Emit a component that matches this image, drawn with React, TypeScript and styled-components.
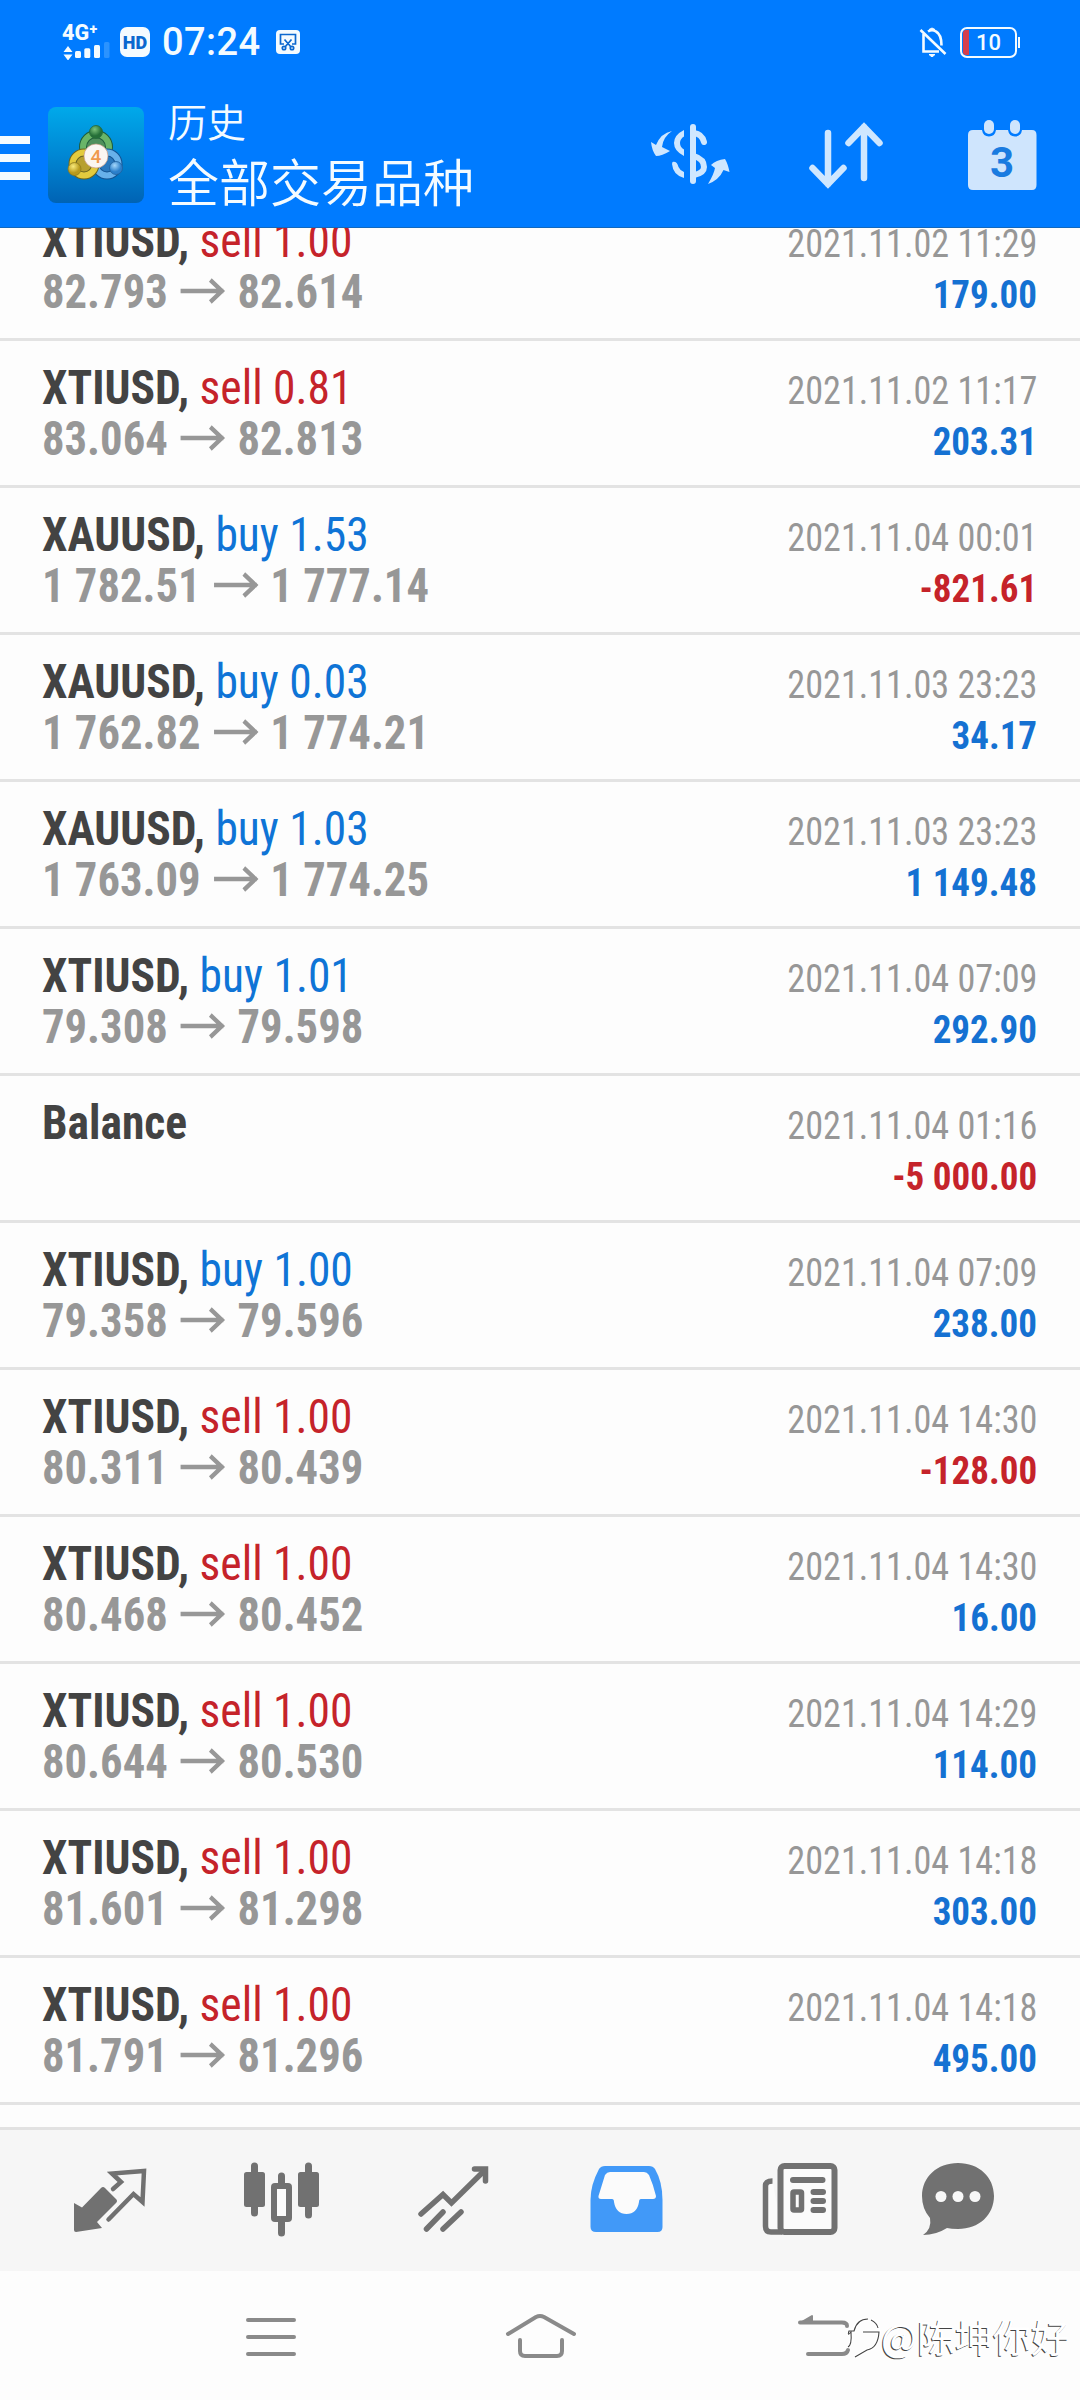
import React from "react";
import styled, { createGlobalStyle } from "styled-components";

const condensed = `"Roboto Condensed", Roboto, sans-serif`;
const cjk = `Roboto, "Noto Sans CJK SC", sans-serif`;

const Global = createGlobalStyle`
  * { box-sizing: border-box; }
  body { margin: 0; background: #fdfdfd; }
  svg { display: block; flex: none; }
`;

const Screen = styled.div`
  width: 1080px;
  height: 2400px;
  display: flex;
  flex-direction: column;
  overflow: hidden;
  background: #fdfdfd;
  font-family: ${cjk};
`;

const Header = styled.header`
  height: 228px;
  flex: none;
  background: #007bff;
  border-bottom: 1px solid #1268bd;
  color: #f4fbff;
`;

const StatusBar = styled.div`
  height: 84px;
  display: flex;
  align-items: center;
  padding: 0 60px 0 62px;
`;

const Network = styled.div`
  width: 58px;
  height: 36px;
  display: flex;
  flex-direction: column;
  justify-content: space-between;
`;

const NetworkLabel = styled.span`
  font: 800 21.5px/18px Roboto, sans-serif;
  height: 17px;
`;

const HdBadge = styled.span`
  width: 30px;
  height: 30px;
  border-radius: 7px;
  background: #f4fbff;
  color: #0b68cf;
  font: 900 18px/31px Roboto, sans-serif;
  text-align: center;
`;

const Clock = styled.span`
  margin-left: 12px;
  width: 100px;
  font: 500 38px/40px Roboto, sans-serif;
  letter-spacing: 0.4px;
`;

const Spacer = styled.div`
  flex: 1;
`;

const Battery = styled.div`
  position: relative;
  width: 57px;
  height: 31px;
  margin: 0 3px 0 13px;
  border: 2.5px solid #f4fbff;
  border-radius: 7px;
  font: 500 22px/27px Roboto, sans-serif;
  text-align: center;
  &::before {
    content: "";
    position: absolute;
    left: 1px;
    top: 1px;
    bottom: 1px;
    width: 6px;
    border-radius: 3px 0 0 3px;
    background: #d63f4c;
  }
  &::after {
    content: "";
    position: absolute;
    right: -5px;
    top: 8px;
    width: 2px;
    height: 11px;
    background: #f4fbff;
  }
`;

const AppBar = styled.div`
  height: 143px;
  display: flex;
  align-items: flex-start;
`;

const MenuButton = styled.div`
  width: 30px;
  height: 44px;
  margin-top: 52px;
  display: flex;
  flex-direction: column;
  justify-content: space-between;
  span {
    height: 8px;
    background: #f4fbff;
  }
`;

const Logo = styled.div`
  margin: 23px 0 0 18px;
  width: 96px;
  height: 96px;
  border-radius: 8px;
  background: linear-gradient(#00a9ea, #0087d4 50%, #0063b4);
`;

const Titles = styled.div`
  margin: 13px 0 0 24px;
  width: 482px;
  display: flex;
  flex-direction: column;
  font-weight: 350;
`;

const Caption = styled.span`
  font-size: 39px;
  line-height: 54px;
`;

const Title = styled.span`
  margin-top: 2px;
  font-size: 51px;
  line-height: 64px;
`;

const List = styled.main`
  flex: none;
  height: 1899px;
  overflow: hidden;
`;

const Rows = styled.div`
  margin-top: -34px;
`;

const Row = styled.div`
  height: 147px;
  padding: 21px 43px 0 42px;
  border-bottom: 3px solid #e3e3e3;
  display: flex;
  justify-content: space-between;
`;

const Side = styled.div<{ $end?: boolean }>`
  display: flex;
  flex-direction: column;
  align-items: ${(p) => (p.$end ? "flex-end" : "flex-start")};
  white-space: pre;
  font-family: ${condensed};
`;

const Instrument = styled.div`
  font-size: 48px;
  line-height: 51px;
  font-weight: 700;
  color: #434343;
  transform: scaleX(0.948);
  transform-origin: left;
`;

const Order = styled.span<{ $sell: boolean }>`
  font-weight: 400;
  color: ${(p) => (p.$sell ? "#c5232a" : "#0f74d6")};
`;

const Prices = styled.div`
  display: flex;
  align-items: center;
  gap: 13px;
  font-size: 48px;
  line-height: 51px;
  font-weight: 700;
  color: #979797;
  transform: scaleX(0.93);
  transform-origin: left;
`;

const Time = styled.div`
  font-size: 39.4px;
  line-height: 51px;
  padding-top: 3px;
  margin-bottom: -3px;
  color: #979797;
  transform: scaleX(0.918);
  transform-origin: right;
`;

const Profit = styled.div<{ $loss: boolean }>`
  font-size: 39.4px;
  line-height: 51px;
  padding-top: 3px;
  font-weight: 700;
  color: ${(p) => (p.$loss ? "#c5232a" : "#1571d2")};
  transform: scaleX(0.94);
  transform-origin: right;
`;

const TabBar = styled.nav`
  height: 144px;
  flex: none;
  padding-left: 24px;
  display: flex;
  border-top: 3px solid #e2e2e2;
  background: #f6f6f6;
`;

const SystemNav = styled.div`
  position: relative;
  height: 129px;
  flex: none;
`;

const Watermark = styled.div`
  position: absolute;
  left: 846px;
  top: 38px;
  display: flex;
  align-items: center;
  font: 400 38px/54px "Noto Sans CJK SC", sans-serif;
  color: #fff;
  text-shadow: -1px 1px 0 #444;
  white-space: nowrap;
`;

type Trade = [string, string, string, string, string, string];

const trades: Trade[] = [
  ["XTIUSD", "sell 1.00", "82.793", "82.614", "2021.11.02 11:29", "179.00"],
  ["XTIUSD", "sell 0.81", "83.064", "82.813", "2021.11.02 11:17", "203.31"],
  ["XAUUSD", "buy 1.53", "1 782.51", "1 777.14", "2021.11.04 00:01", "-821.61"],
  ["XAUUSD", "buy 0.03", "1 762.82", "1 774.21", "2021.11.03 23:23", "34.17"],
  ["XAUUSD", "buy 1.03", "1 763.09", "1 774.25", "2021.11.03 23:23", "1 149.48"],
  ["XTIUSD", "buy 1.01", "79.308", "79.598", "2021.11.04 07:09", "292.90"],
  ["Balance", "", "", "", "2021.11.04 01:16", "-5 000.00"],
  ["XTIUSD", "buy 1.00", "79.358", "79.596", "2021.11.04 07:09", "238.00"],
  ["XTIUSD", "sell 1.00", "80.311", "80.439", "2021.11.04 14:30", "-128.00"],
  ["XTIUSD", "sell 1.00", "80.468", "80.452", "2021.11.04 14:30", "16.00"],
  ["XTIUSD", "sell 1.00", "80.644", "80.530", "2021.11.04 14:29", "114.00"],
  ["XTIUSD", "sell 1.00", "81.601", "81.298", "2021.11.04 14:18", "303.00"],
  ["XTIUSD", "sell 1.00", "81.791", "81.296", "2021.11.04 14:18", "495.00"],
];

const PriceArrow = () => (
  <svg width="49" height="28" viewBox="0 0 49 28" fill="none" stroke="#979797" strokeWidth="4.4">
    <path d="M1 13H47M33 2L45.500 13L33 24" />
  </svg>
);

const TabIcon = ({ slot, children }: { slot: number; children: React.ReactNode }) => (
  <svg
    width="173"
    height="141"
    viewBox={`${24 + slot * 173} 2130 173 141`}
    fill="none"
    stroke="#717171"
    strokeWidth="6"
    strokeLinecap="round"
    strokeLinejoin="round"
  >
    {children}
  </svg>
);

const LogoArt = () => (
  <svg width="96" height="96" viewBox="48 107 96 96">
    <defs>
      <radialGradient id="gr" cx=".4" cy=".3"><stop offset="0" stopColor="#7cc27a" /><stop offset="1" stopColor="#256f38" /></radialGradient>
      <radialGradient id="ye" cx=".4" cy=".3"><stop offset="0" stopColor="#f8ea7c" /><stop offset="1" stopColor="#b89a1c" /></radialGradient>
      <radialGradient id="bl" cx=".4" cy=".3"><stop offset="0" stopColor="#a5d7fa" /><stop offset="1" stopColor="#2a7fcb" /></radialGradient>
    </defs>
    <circle cx="96" cy="147" r="13" fill="#4f8f5c" stroke="#1f5d3c" strokeWidth="8" />
    <circle cx="96" cy="147" r="13" fill="none" stroke="#69b568" strokeWidth="6" />
    <circle cx="107" cy="164" r="11.500" fill="#2b79bd" stroke="#135392" strokeWidth="8" />
    <circle cx="107" cy="164" r="11.500" fill="none" stroke="#68b1ea" strokeWidth="6" />
    <circle cx="84" cy="164" r="11.500" fill="#b7a030" stroke="#6a6420" strokeWidth="8" />
    <circle cx="84" cy="164" r="11.500" fill="none" stroke="#e3cb3e" strokeWidth="6" />
    <circle cx="96" cy="132" r="6.500" fill="url(#gr)" stroke="#246838" strokeWidth=".8" />
    <circle cx="74.500" cy="169" r="6.500" fill="url(#ye)" stroke="#8d7a1d" strokeWidth=".8" />
    <circle cx="116" cy="168" r="6.500" fill="url(#bl)" stroke="#205f9c" strokeWidth=".8" />
    <circle cx="96" cy="156" r="12" fill="#fbf6f2" stroke="#c99a82" strokeWidth=".7" />
    <text x="96" y="163" fontSize="19" textAnchor="middle" fontFamily="Roboto" fontWeight="500" fill="#f09a4e">4</text>
  </svg>
);

export default function App() {
  return (
    <Screen>
      <Global />
      <Header>
        <StatusBar>
          <Network>
            <NetworkLabel>4G⁺</NetworkLabel>
            <svg width="50" height="18" viewBox="62 40 50 18" fill="#f4fbff">
              <path d="M63.500 50L68 44L72.500 50ZM63.500 52.500L68 58.500L72.500 52.500Z" />
              <rect x="75" y="49" width="6" height="7" rx="1.500" />
              <rect x="84.300" y="46.300" width="6" height="9.700" rx="1.500" />
              <rect x="94" y="43" width="6" height="13" rx="1.500" />
              <rect x="104" y="40" width="5.500" height="16" rx="1.500" fill="#2b93ff" />
            </svg>
          </Network>
          <HdBadge>HD</HdBadge>
          <Clock>07:24</Clock>
          <svg width="24" height="24" viewBox="0 0 24 24" fill="none" stroke="#0b68cf" strokeWidth="1.700" style={{ marginLeft: 14 }}>
            <rect width="24" height="24" rx="4" fill="#f4fbff" stroke="none" />
            <path d="M8 14H4.500V4.500H19.500V14H16M8.500 9.500L15 17M15.500 9.500L9 17" />
            <circle cx="8" cy="18" r="1.700" />
            <circle cx="16" cy="18" r="1.700" />
          </svg>
          <Spacer />
          <svg width="28" height="30" viewBox="919 27 28 30" fill="none" stroke="#f4fbff" strokeWidth="2.600">
            <path d="M923.500 34V51.500H939M928 31.500Q932 29 936 31.500Q941.500 34.500 941.500 45.500M920.500 30L945.500 54" />
            <path d="M929 54.500H935L932 57ZM929 29.500L932 28L935 29.500Z" fill="#f4fbff" strokeWidth="1" />
          </svg>
          <Battery>10</Battery>
        </StatusBar>
        <AppBar>
          <MenuButton><span /><span /><span /></MenuButton>
          <Logo><LogoArt /></Logo>
          <Titles>
            <Caption>历史</Caption>
            <Title>全部交易品种</Title>
          </Titles>
          <svg width="400" height="110" viewBox="640 84 400 110" style={{ marginLeft: -10 }} fill="none" stroke="#cfe7ff" strokeWidth="6" strokeLinecap="round">
            <path d="M693 127V181" />
            <path d="M684 130Q674 135 674 143Q674 151 684 156V149.500Q680 147 680 143Q680 139 684 136.500ZM672.500 162Q677 161 678.500 167Q680 170.500 684 172V178Q673 175 672 164Z" fill="#cfe7ff" stroke="none" />
            <path d="M694 133Q702 134 704 142M694 156Q704 159 704 167Q704 173 694 175" />
            <path d="M672 131Q663 137 662 147L670 151Q662 156 656 156Q652 151 651 142L656 145Q661 133 672 131Z" fill="#cfe7ff" stroke="none" />
            <path d="M708 184Q714 174 715 168L711 165Q716 160 725 159Q728 164 729.500 172L723.500 170Q719 180 708 184Z" fill="#cfe7ff" stroke="none" />
            <path d="M828 133V184M812.500 168L828 184L843.500 168M864 178V127M848.500 143L864 127L879.500 143" strokeWidth="6.500" />
            <path d="M972 130H982Q983 136.500 989 136.500Q995 136.500 996 130H1008Q1009 136.500 1015 136.500Q1021 136.500 1022 130H1032Q1036.500 130 1036.500 135V185Q1036.500 190 1032 190H973Q968 190 968 185V135Q968 130 973 130Z" fill="#cfe5fd" stroke="none" />
            <rect x="984" y="120" width="10" height="14" rx="5" fill="#cfe5fd" stroke="none" />
            <rect x="1010" y="120" width="10" height="14" rx="5" fill="#cfe5fd" stroke="none" />
            <text x="1002" y="177" fontSize="42" fontWeight="700" textAnchor="middle" fontFamily="Roboto" fill="#1a7be0" stroke="none">3</text>
          </svg>
        </AppBar>
      </Header>
      <List>
        <Rows>
          {trades.map(([symbol, order, from, to, time, profit], i) => (
            <Row key={i}>
              <Side>
                <Instrument>
                  {symbol}
                  {order && ", "}
                  {order && <Order $sell={order.startsWith("sell")}>{order}</Order>}
                </Instrument>
                {from && (
                  <Prices>
                    <span>{from}</span>
                    <PriceArrow />
                    <span>{to}</span>
                  </Prices>
                )}
              </Side>
              <Side $end>
                <Time>{time}</Time>
                <Profit $loss={profit.startsWith("-")}>{profit}</Profit>
              </Side>
            </Row>
          ))}
        </Rows>
      </List>
      <TabBar>
        <TabIcon slot={0}>
          <path d="M74 2203L82 2207.500L101 2188Q103 2186 105 2188L116 2199Q118 2201 116 2203L97 2222L102 2228L76 2232Q74 2232 74 2230Z" fill="#717171" stroke="none" />
          <path d="M113 2189L121 2182L112 2173.500L144 2171L142.500 2202L133.500 2194L108.500 2219.500" strokeWidth="4.500" strokeLinejoin="miter" />
        </TabIcon>
        <TabIcon slot={1}>
          <path d="M254.500 2166V2213M308.500 2166V2215M281.500 2176V2185M281.500 2222V2233" strokeWidth="7" />
          <rect x="244" y="2172" width="21" height="35" rx="2.500" fill="#717171" stroke="none" />
          <rect x="298" y="2172" width="21" height="35" rx="2.500" fill="#717171" stroke="none" />
          <rect x="274" y="2186" width="15" height="33" rx="1" fill="#fbfbfb" />
        </TabIcon>
        <TabIcon slot={2}>
          <path d="M421 2214L443 2194.500L451.500 2203L485 2170" strokeWidth="5.500" strokeLinejoin="miter" />
          <path d="M474.500 2169H485.500V2181" strokeLinejoin="miter" strokeWidth="5.500" />
          <path d="M426.500 2229L443 2212M443 2229L461 2212" strokeWidth="5.500" />
        </TabIcon>
        <TabIcon slot={3}>
          <path d="M605 2166H649Q653 2166 655 2169Q662.500 2182 662.500 2200V2227Q662.500 2232 657.500 2232H596Q590.500 2232 590.500 2227V2200Q590.500 2185 599 2169Q601 2166 605 2166Z" fill="#4199f8" stroke="none" />
          <path d="M610 2172H644Q647 2172 649 2175Q653 2184 656 2196Q656 2199 653 2199H641Q639 2199 639 2202Q637 2214 626.500 2214Q616 2214 614 2202Q614 2199 612 2199H601Q598 2199 598.500 2196L605 2175Q607 2172 610 2172Z" fill="#fbfbfb" stroke="none" />
        </TabIcon>
        <TabIcon slot={4}>
          <path d="M772.500 2181Q765.500 2181 765.500 2186V2226Q765.500 2232 771 2232H782" strokeWidth="5.500" fill="#fbfbfb" strokeLinecap="butt" />
          <rect x="780.500" y="2166" width="54" height="66" rx="4" fill="#fbfbfb" />
          <path d="M793 2180H822.500M813.500 2192H823M813.500 2201H823M813.500 2210H823" />
          <rect x="793" y="2192" width="8.500" height="18" rx="1" fill="#fbfbfb" strokeWidth="5.500" />
        </TabIcon>
        <TabIcon slot={5}>
          <path d="M958 2163C979 2163 994 2177 994 2196C994 2215 979 2229 958 2229Q951 2229 947 2228Q936 2235 923 2235Q932 2229 930 2218Q922 2209 922 2196C922 2177 937 2163 958 2163Z" fill="#717171" stroke="none" />
          <g fill="#f8f8f8" stroke="none">
            <circle cx="941" cy="2196.500" r="5.500" />
            <circle cx="958" cy="2196.500" r="5.500" />
            <circle cx="975" cy="2196.500" r="5.500" />
          </g>
        </TabIcon>
      </TabBar>
      <SystemNav>
        <svg width="1080" height="129" viewBox="0 2271 1080 129" fill="none" stroke="#8a8a8a" strokeWidth="4" strokeLinecap="round" strokeLinejoin="round">
          <path d="M248 2320H294M248 2337H294M248 2354H294" />
          <path d="M508 2334L536 2317Q540 2315 544 2317L574 2334M520 2340V2351Q520 2356 525 2356H557Q562 2356 562 2351V2340" />
          <path d="M800 2322.500H842Q847 2322.500 847 2326M808 2354H842Q847 2354 848 2350" />
          <path d="M800 2323L812 2316V2323Z" fill="#8a8a8a" strokeWidth="2" />
        </svg>
        <Watermark>
          <svg width="35" height="46" viewBox="845 2318 35 46" fill="none">
            <path d="M867 2324Q856 2324 853 2336H848Q846 2342 850 2337Q851 2350 847 2352M862 2337H878Q877 2353 866 2355L854 2362M870 2325Q876 2328 877 2333" stroke="#fff" strokeWidth="4" />
            <path d="M867 2324Q856 2324 853 2336H848Q846 2342 850 2337Q851 2350 847 2352M862 2337H878Q877 2353 866 2355L854 2362M870 2325Q876 2328 877 2333" stroke="#444" strokeWidth="1.100" />
          </svg>
          <span>@陈坤你好</span>
        </Watermark>
      </SystemNav>
    </Screen>
  );
}
